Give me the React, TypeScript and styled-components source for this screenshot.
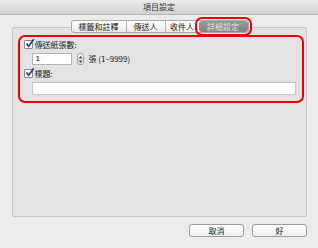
import React from "react";
import styled, { createGlobalStyle } from "styled-components";

const Global = createGlobalStyle`
  html, body { margin: 0; padding: 0; }
  body {
    font-family: "Noto Sans CJK TC", "Liberation Sans", sans-serif;
    background: #ececec;
  }
`;

const Window = styled.div`
  width: 318px;
  height: 248px;
  background: #ececec;
  display: flex;
  flex-direction: column;
  overflow: hidden;
`;

const TitleBar = styled.div`
  height: 15px;
  background: linear-gradient(#ebebeb, #d2d2d2);
  border-bottom: 1px solid #b8b8b8;
  display: flex;
  align-items: center;
  justify-content: center;
  font-size: 8px;
  color: #333;
  line-height: 1;
`;

const Body = styled.div`
  flex: 1;
  display: flex;
  flex-direction: column;
  padding: 5px 11px 11px 12px;
`;

const TabBar = styled.div`
  display: flex;
  justify-content: center;
  margin-bottom: -6px;
  position: relative;
  z-index: 1;
`;

const TabGroup = styled.div`
  display: flex;
  height: 11px;
  border: 1px solid #a9a9a9;
  border-radius: 3px;
  background: linear-gradient(#ffffff, #ececec);
`;

const Tab = styled.div<{ $active?: boolean; $w: number }>`
  width: ${(p) => p.$w}px;
  display: flex;
  align-items: center;
  justify-content: center;
  font-size: 8px;
  line-height: 1;
  color: ${(p) => (p.$active ? "#e2e2e2" : "#222")};
  background: ${(p) => (p.$active ? "linear-gradient(#9a9a9a, #828282)" : "transparent")};
  border-left: ${(p) => (p.$active ? "none" : "1px solid #b4b4b4")};
  &:first-child { border-left: none; }
  ${(p) =>
    p.$active
      ? `outline: 2.5px solid #ee0000; outline-offset: 2px; border-radius: 3px;`
      : ""}
`;

const Panel = styled.div`
  height: 190px;
  background: #e3e3e3;
  border: 1px solid #c6c6c6;
  border-radius: 2px;
  padding: 7px 2px 0 5px;
  box-sizing: border-box;
`;

const Highlight = styled.div`
  border: 2.5px solid #ee0000;
  border-radius: 7px;
  padding: 2px 6px 4px 3.5px;
  display: flex;
  flex-direction: column;
  height: 68px;
  box-sizing: border-box;
`;

const CheckRow = styled.label`
  display: flex;
  align-items: center;
  gap: 2px;
  font-size: 8px;
  color: #222;
  line-height: 1;
  height: 11px;
`;

const CheckBox = styled.span`
  width: 7px;
  height: 7px;
  border: 1px solid #8a8a8a;
  background: #fff;
  border-radius: 1px;
  position: relative;
  display: inline-block;
  flex: none;
`;

const Check = styled.svg`
  position: absolute;
  left: -1px;
  top: -3px;
  width: 11px;
  height: 11px;
`;

const InputRow = styled.div`
  display: flex;
  align-items: center;
  margin: 3px 0 3px 8px;
  height: 12px;
  gap: 4px;
`;

const NumInput = styled.div`
  width: 40px;
  height: 12px;
  box-sizing: border-box;
  background: #fff;
  border: 1px solid #b4b4b4;
  font-family: "Liberation Sans", sans-serif;
  font-size: 8px;
  line-height: 10px;
  padding-left: 3px;
  color: #111;
`;

const Stepper = styled.div`
  width: 7px;
  height: 12px;
  box-sizing: border-box;
  border: 1px solid #a0a0a0;
  border-radius: 3px;
  background: linear-gradient(#fff, #e6e6e6);
  display: flex;
  align-items: center;
  justify-content: center;
  margin-left: 1px;
`;

const Unit = styled.span`
  font-size: 8px;
  color: #222;
  margin-left: 1px;
  line-height: 1;
`;

const TitleInput = styled.div`
  margin: 3px 0 0 8px;
  height: 13px;
  background: #fff;
  border: 1px solid #c4c4c4;
  box-sizing: border-box;
`;

const Footer = styled.div`
  display: flex;
  justify-content: flex-end;
  gap: 8px;
  margin-top: 7px;
`;

const Button = styled.div`
  width: 55px;
  height: 13px;
  box-sizing: border-box;
  border: 1px solid #9c9c9c;
  border-radius: 3px;
  background: linear-gradient(#ffffff, #eeeeee);
  display: flex;
  align-items: center;
  justify-content: center;
  font-size: 8px;
  color: #222;
  line-height: 1;
`;

const CheckMark = () => (
  <Check viewBox="0 0 11 11">
    <path d="M2.5 5.5 L4.6 8.3 L9.8 1.2" fill="none" stroke="#1f3f8f" strokeWidth="1.6" />
  </Check>
);

export default function App() {
  return (
    <Window>
      <Global />
      <TitleBar>項目設定</TitleBar>
      <Body>
        <TabBar>
          <TabGroup>
            <Tab $w={54}>標籤和註釋</Tab>
            <Tab $w={38}>傳送人</Tab>
            <Tab $w={33}>收件人</Tab>
            <Tab $w={49} $active>詳細設定</Tab>
          </TabGroup>
        </TabBar>
        <Panel>
          <Highlight>
            <CheckRow>
              <CheckBox>
                <CheckMark />
              </CheckBox>
              傳送紙張數:
            </CheckRow>
            <InputRow>
              <NumInput>1</NumInput>
              <Stepper>
                <svg width="5" height="9" viewBox="0 0 5 9">
                  <path d="M2.5 1 L4.5 3.5 H0.5 Z M2.5 8 L4.5 5.5 H0.5 Z" fill="#444" />
                </svg>
              </Stepper>
              <Unit>張 (1–9999)</Unit>
            </InputRow>
            <CheckRow>
              <CheckBox>
                <CheckMark />
              </CheckBox>
              標題:
            </CheckRow>
            <TitleInput />
          </Highlight>
        </Panel>
        <Footer>
          <Button>取消</Button>
          <Button>好</Button>
        </Footer>
      </Body>
    </Window>
  );
}
